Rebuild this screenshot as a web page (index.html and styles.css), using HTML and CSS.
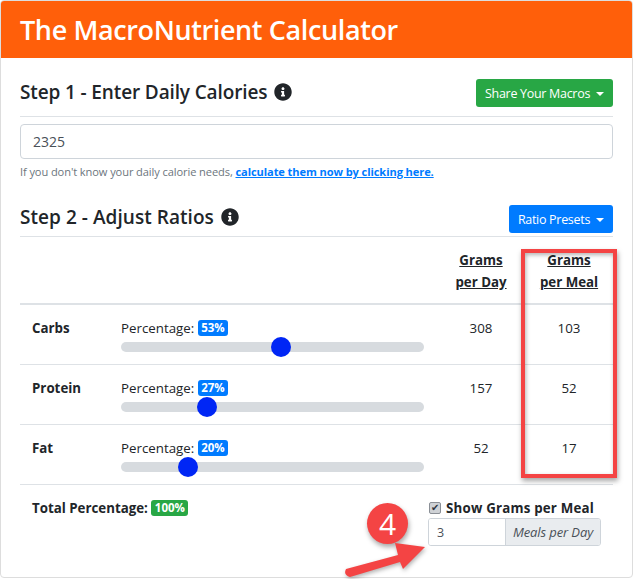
FILE: index.html
```html
<!DOCTYPE html>
<html lang="en">
<head>
    <meta charset="UTF-8">
    <meta name="viewport" content="width=device-width, initial-scale=1.0">
    <title>The MacroNutrient Calculator</title>
    <link rel="stylesheet" href="styles.css">
</head>
<body>
    <div class="card">
        <header class="card-header">
            <h1>The MacroNutrient Calculator</h1>
        </header>
        <div class="card-body">
            <div class="step-head">
                <h2>Step 1 - Enter Daily Calories
                    <svg class="info" viewBox="0 0 512 512"><path d="M256 8C119.043 8 8 119.083 8 256c0 136.997 111.043 248 248 248s248-111.003 248-248C504 119.083 392.957 8 256 8zm0 110c23.196 0 42 18.804 42 42s-18.804 42-42 42-42-18.804-42-42 18.804-42 42-42zm56 254c0 6.627-5.373 12-12 12h-88c-6.627 0-12-5.373-12-12v-24c0-6.627 5.373-12 12-12h12v-64h-12c-6.627 0-12-5.373-12-12v-24c0-6.627 5.373-12 12-12h64c6.627 0 12 5.373 12 12v100h12c6.627 0 12 5.373 12 12v24z"/></svg>
                </h2>
                <button class="btn btn-green" type="button">Share Your Macros <span class="caret"></span></button>
            </div>
            <input class="calories" type="text" value="2325">
            <p class="help">If you don't know your daily calorie needs, <a href="#">calculate them now by clicking here.</a></p>

            <div class="step-head step-two">
                <h2>Step 2 - Adjust Ratios
                    <svg class="info" viewBox="0 0 512 512"><path d="M256 8C119.043 8 8 119.083 8 256c0 136.997 111.043 248 248 248s248-111.003 248-248C504 119.083 392.957 8 256 8zm0 110c23.196 0 42 18.804 42 42s-18.804 42-42 42-42-18.804-42-42 18.804-42 42-42zm56 254c0 6.627-5.373 12-12 12h-88c-6.627 0-12-5.373-12-12v-24c0-6.627 5.373-12 12-12h12v-64h-12c-6.627 0-12-5.373-12-12v-24c0-6.627 5.373-12 12-12h64c6.627 0 12 5.373 12 12v100h12c6.627 0 12 5.373 12 12v24z"/></svg>
                </h2>
                <button class="btn btn-blue" type="button">Ratio Presets <span class="caret"></span></button>
            </div>

            <div class="row row-head">
                <div></div>
                <div></div>
                <div class="num"><u>Grams</u><br><u>per Day</u></div>
                <div class="num"><u>Grams</u><br><u>per Meal</u></div>
            </div>
            <div class="row">
                <div class="name">Carbs</div>
                <div class="ratio">
                    <div>Percentage: <span class="badge badge-blue">53%</span></div>
                    <input class="slider" type="range" min="0" max="100" value="53">
                </div>
                <div class="num">308</div>
                <div class="num">103</div>
            </div>
            <div class="row">
                <div class="name">Protein</div>
                <div class="ratio">
                    <div>Percentage: <span class="badge badge-blue">27%</span></div>
                    <input class="slider" type="range" min="0" max="100" value="27">
                </div>
                <div class="num">157</div>
                <div class="num">52</div>
            </div>
            <div class="row">
                <div class="name">Fat</div>
                <div class="ratio">
                    <div>Percentage: <span class="badge badge-blue">20%</span></div>
                    <input class="slider" type="range" min="0" max="100" value="20">
                </div>
                <div class="num">52</div>
                <div class="num">17</div>
            </div>

            <div class="totals">
                <div class="name">Total Percentage: <span class="badge badge-green">100%</span></div>
                <div class="meals">
                    <label class="show-meals"><input type="checkbox" checked> Show Grams per Meal</label>
                    <div class="input-group">
                        <input type="text" value="3">
                        <span class="addon">Meals per Day</span>
                    </div>
                </div>
            </div>
        </div>
    </div>

    <!-- annotations drawn over the screenshot -->
    <div class="note-box"></div>
    <div class="note-number">4</div>
    <svg class="note-arrow" viewBox="0 0 90 40" width="90" height="40">
        <path d="M5 29 L57 15 L54 3 L84 7 L62 29 L59 22 L9 37 Q2 35 5 29 Z"/>
    </svg>
</body>
</html>
```

FILE: styles.css
```css
html, body {
    height: 100%;
}
body {
    font-family: "Open Sans", Arial, sans-serif;
    font-size: 13.3px;
    line-height: 20px;
    margin: 0;
    color: #212529;
    background-color: white;
    overflow: hidden;
    position: relative;
}
.card {
    width: 633px;
    height: 578px;
    box-sizing: border-box;
    border: 1px solid #ddd;
    border-radius: 4px;
    background-color: white;
    overflow: hidden;
}
.card-header {
    background-color: #ff5f0a;
    height: 57px;
    padding-left: 19px;
    display: flex;
    align-items: center;
}
h1 {
    margin: 0;
    color: white;
    font-size: 27px;
    font-weight: 600;
    letter-spacing: -0.38px;
}
.card-body {
    padding: 21px 19px 0 19px;
}
.step-head {
    display: flex;
    justify-content: space-between;
    align-items: center;
    height: 37px;
    border-bottom: 1px solid #dee2e6;
    margin-bottom: 7px;
}
.step-head .btn {
    margin-bottom: 9px;
}
h2 {
    margin: 0 0 11px 0;
    font-size: 19px;
    font-weight: 600;
    letter-spacing: -0.13px;
    display: flex;
    align-items: center;
    gap: 7px;
}
.info {
    width: 18px;
    height: 18px;
    fill: #212529;
}
.btn {
    height: 28px;
    border: none;
    border-radius: 3px;
    color: white;
    font-family: inherit;
    font-size: 12.5px;
    padding: 0 9px;
    letter-spacing: -0.3px;
}
.btn-green {
    background-color: #28a745;
}
.btn-blue {
    background-color: #007bff;
}
.caret {
    display: inline-block;
    margin-left: 3px;
    vertical-align: 2px;
    border-top: 4px solid white;
    border-left: 4px solid transparent;
    border-right: 4px solid transparent;
}
.calories {
    display: block;
    width: 100%;
    height: 35px;
    box-sizing: border-box;
    border: 1px solid #ced4da;
    border-radius: 4px;
    padding: 0 12px;
    font-family: inherit;
    font-size: 14px;
    color: #495057;
}
.help {
    margin: 3px 0 0 0;
    font-size: 11.1px;
    line-height: 20px;
    color: #6c757d;
    letter-spacing: -0.1px;
}
.help a {
    color: #007bff;
    font-weight: 700;
}
.step-two {
    margin-top: 23px;
    margin-bottom: 0;
    height: 31px;
}
.step-two h2 {
    margin-bottom: 7px;
    letter-spacing: 0.05px;
}
.step-two .btn {
    margin-bottom: 3px;
}
.row {
    display: grid;
    grid-template-columns: 89px 1fr 88px 88px;
    height: 59px;
    border-bottom: 1px solid #dee2e6;
    padding: 0 0 0 12px;
}
.row > div {
    padding-top: 13px;
}
.row-head {
    height: 66px;
    border-bottom-width: 2px;
    font-weight: 700;
    line-height: 22px;
}
.row-head > div {
    padding-top: 12px;
}
.name {
    font-weight: 700;
}
.num {
    text-align: center;
}
.ratio {
    width: 303px;
}
.badge {
    display: inline-block;
    height: 16px;
    line-height: 16px;
    padding: 0 3.5px;
    border-radius: 3px;
    color: white;
    font-size: 11.5px;
    font-weight: 700;
    vertical-align: 1px;
}
.badge-blue {
    background-color: #007bff;
}
.badge-green {
    background-color: #28a745;
}
.slider {
    -webkit-appearance: none;
    appearance: none;
    display: block;
    width: 303px;
    height: 10px;
    margin: 4px 0 0 0;
    border-radius: 5px;
    background-color: #d7dbdf;
}
.slider::-webkit-slider-thumb {
    -webkit-appearance: none;
    width: 20px;
    height: 20px;
    border-radius: 50%;
    background-color: #0026f5;
}
.totals {
    display: flex;
    justify-content: space-between;
    padding: 13px 12px 0 12px;
}
.meals {
    width: 173px;
}
.show-meals {
    display: flex;
    align-items: center;
    gap: 5px;
    height: 20px;
    font-weight: 700;
    white-space: nowrap;
    letter-spacing: 0.2px;
}
.show-meals input {
    -webkit-appearance: none;
    appearance: none;
    box-sizing: border-box;
    margin: 0 0 0 1px;
    width: 12px;
    height: 12px;
    border: 1px solid #8a8f96;
    border-radius: 2px;
    background-color: #cfd2d6;
    color: #2c3440;
    font-size: 10px;
    line-height: 10px;
    text-align: center;
}
.show-meals input::before {
    content: "\2714";
}
.input-group {
    display: flex;
    height: 28px;
    box-sizing: border-box;
    border: 1px solid #ced4da;
    border-radius: 3px;
    overflow: hidden;
}
.input-group input {
    width: 76px;
    box-sizing: border-box;
    border: none;
    padding: 0 8px;
    font-family: inherit;
    font-size: 12.5px;
    color: #495057;
}
.addon {
    flex: 1;
    border-left: 1px solid #ced4da;
    background-color: #e9ecef;
    color: #495057;
    font-size: 13px;
    font-style: italic;
    line-height: 26px;
    text-align: center;
    white-space: nowrap;
    letter-spacing: -0.1px;
}
.note-box {
    position: absolute;
    left: 521px;
    top: 249px;
    width: 88px;
    height: 221px;
    border: 4px solid #f44444;
    box-shadow: 1px 3px 5px rgba(0,0,0,0.35), inset 1px 2px 4px rgba(0,0,0,0.3);
}
.note-number {
    position: absolute;
    left: 367px;
    top: 503px;
    width: 41px;
    height: 41px;
    border-radius: 50%;
    background-color: #f44444;
    box-shadow: 1px 3px 5px rgba(0,0,0,0.35);
    color: white;
    font-size: 30px;
    line-height: 41px;
    text-align: center;
}
.note-arrow {
    position: absolute;
    left: 341px;
    top: 540px;
    fill: #f44444;
    filter: drop-shadow(1px 2px 2px rgba(0,0,0,0.3));
}
```
